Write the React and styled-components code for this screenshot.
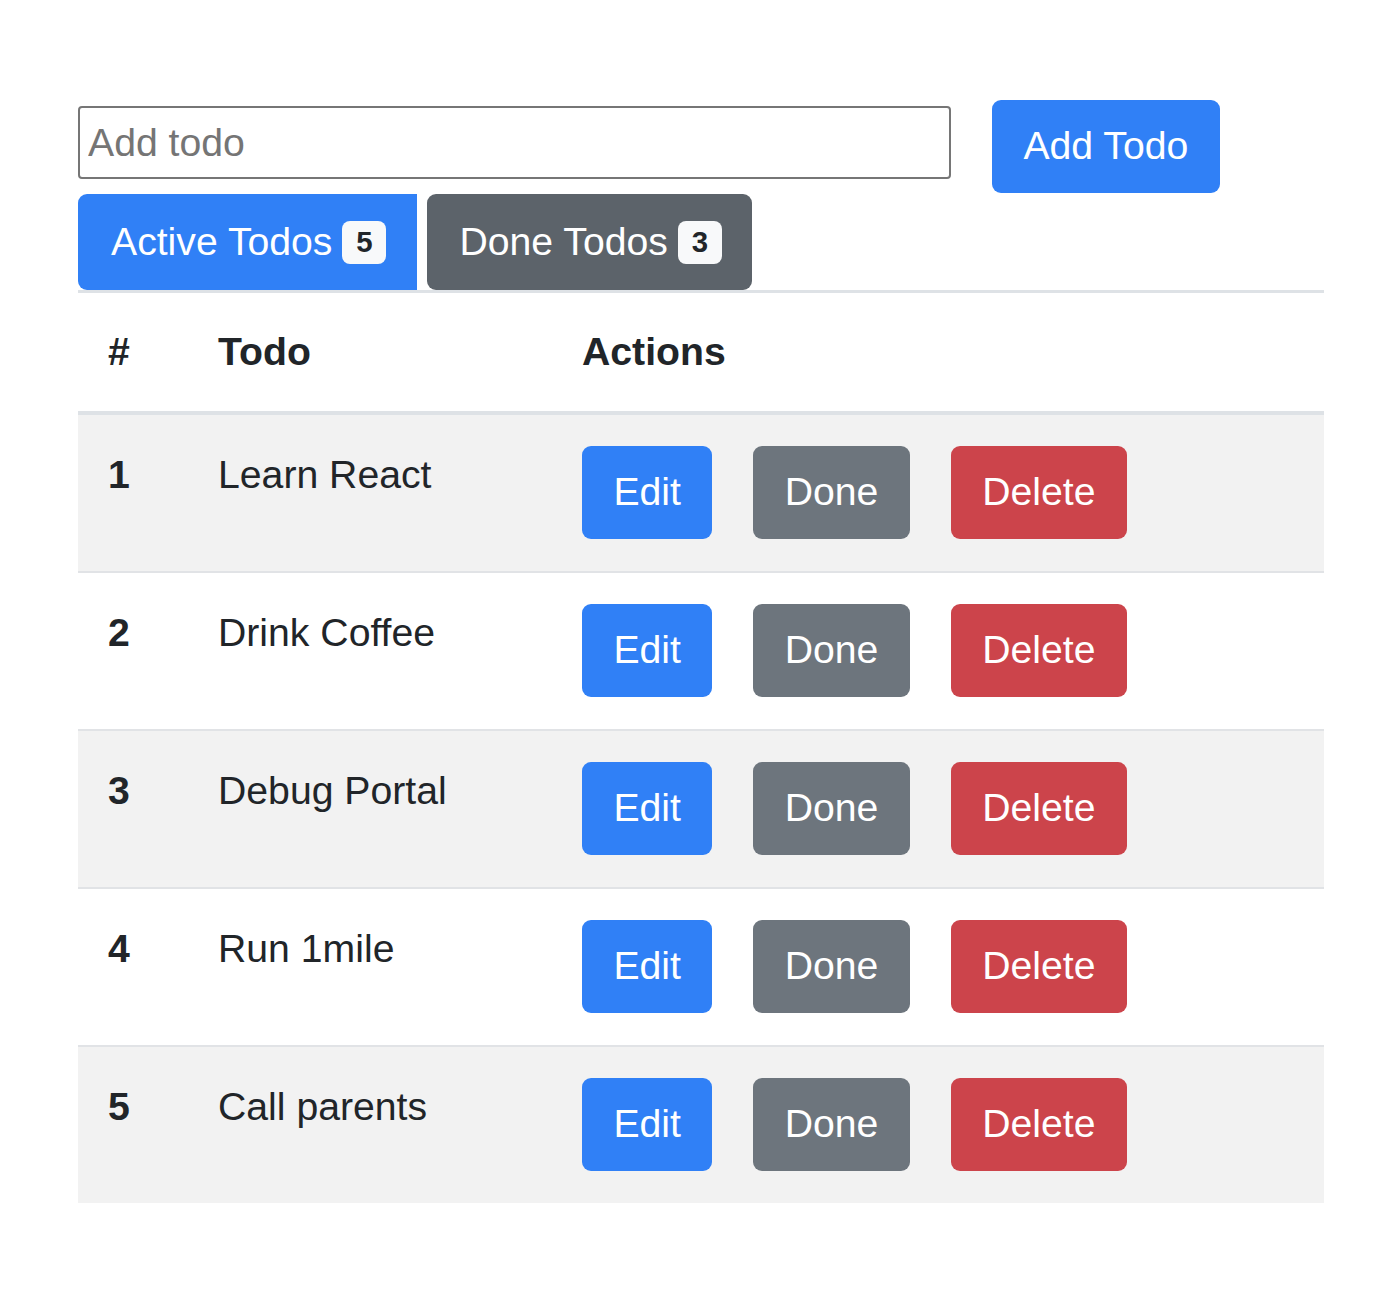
import styled, { createGlobalStyle } from "styled-components";

const todos = [
  { id: 1, title: "Learn React" },
  { id: 2, title: "Drink Coffee" },
  { id: 3, title: "Debug Portal" },
  { id: 4, title: "Run 1mile" },
  { id: 5, title: "Call parents" },
];

const GlobalStyle = createGlobalStyle`
  body {
    margin: 0;
    background: #fff;
    color: #212529;
    font-family: "Liberation Sans", Arial, sans-serif;
    font-size: 39.2px;
    line-height: 1.5;
  }
  * { box-sizing: border-box; }
`;

function App() {
  return (
    <>
      <GlobalStyle />
      <Page>
        <AddRow>
          <TodoInput placeholder="Add todo" />
          <Button $variant="primary">Add Todo</Button>
        </AddRow>
        <Tabs>
          <Tab $active>
            Active Todos<Badge>5</Badge>
          </Tab>
          <Tab>
            Done Todos<Badge>3</Badge>
          </Tab>
        </Tabs>
        <Table>
          <HeadRow>
            <HeadCell>#</HeadCell>
            <HeadCell>Todo</HeadCell>
            <HeadCell>Actions</HeadCell>
          </HeadRow>
          {todos.map((todo, i) => (
            <Row key={todo.id} $striped={i % 2 === 0} $last={i === todos.length - 1}>
              <NumCell>{todo.id}</NumCell>
              <Cell>{todo.title}</Cell>
              <Actions>
                <Button $variant="primary">Edit</Button>
                <Button $variant="secondary">Done</Button>
                <Button $variant="danger">Delete</Button>
              </Actions>
            </Row>
          ))}
        </Table>
      </Page>
    </>
  );
}

const colors = {
  primary: "#3080f6",
  secondary: "#6d757d",
  danger: "#cc444b",
};

const Page = styled.div`
  width: 1246px;
  margin: 0 0 0 78px;
  padding: 100px 0 80px;
`;

const AddRow = styled.div`
  display: flex;
  align-items: flex-start;
  gap: 41px;
`;

const TodoInput = styled.input`
  width: 873px;
  height: 73px;
  margin-top: 6px;
  padding: 0 8px;
  border: 2px solid #767676;
  border-radius: 4px;
  font-family: inherit;
  font-size: 39.2px;
  color: #212529;
  outline: none;

  &::placeholder {
    color: #757575;
  }
`;

const Button = styled.button`
  height: 93px;
  padding: 0 29.4px;
  border: 2.45px solid transparent;
  border-radius: 9px;
  background: ${(p) => colors[p.$variant]};
  color: #fff;
  font-family: inherit;
  font-size: 39.2px;
  line-height: 1.5;
  white-space: nowrap;
  cursor: pointer;
`;

const Tabs = styled.div`
  display: flex;
  gap: 10px;
  margin-top: 1px;
  border-bottom: 3px solid #dee2e6;
`;

const Tab = styled.div`
  display: flex;
  align-items: center;
  gap: 10px;
  height: 96px;
  padding: 0 ${(p) => (p.$active ? "31px" : "30px")} 0 ${(p) => (p.$active ? "33px" : "32px")};
  border-radius: ${(p) => (p.$active ? "9px 0 0 9px" : "9px")};
  background: ${(p) => (p.$active ? "#3080f6" : "#5c636a")};
  color: #fff;
  white-space: nowrap;
`;

const Badge = styled.span`
  display: inline-flex;
  align-items: center;
  justify-content: center;
  height: 43px;
  min-width: 44px;
  padding: 0 12px;
  border-radius: 8px;
  background: #f8f9fa;
  color: #212529;
  font-size: 29.4px;
  font-weight: 700;
  line-height: 1;
`;

const Table = styled.div`
  display: flex;
  flex-direction: column;
`;

const HeadRow = styled.div`
  display: grid;
  grid-template-columns: 110px 364px 1fr;
  padding: 30px 0 29px;
  border-bottom: 4px solid #dee2e6;
`;

const HeadCell = styled.div`
  padding: 0 30px;
  font-weight: 700;
`;

const Row = styled.div`
  display: grid;
  grid-template-columns: 110px 364px 1fr;
  align-items: start;
  padding: 31px 0 32px;
  background: ${(p) => (p.$striped ? "#f2f2f2" : "#fff")};
  border-bottom: ${(p) => (p.$last ? "none" : "2px solid #e1e3e6")};
`;

const Cell = styled.div`
  padding: 0 30px;
`;

const NumCell = styled(Cell)`
  font-weight: 700;
`;

const Actions = styled.div`
  display: flex;
  gap: 41px;
  padding: 0 30px;
`;

export default App;
